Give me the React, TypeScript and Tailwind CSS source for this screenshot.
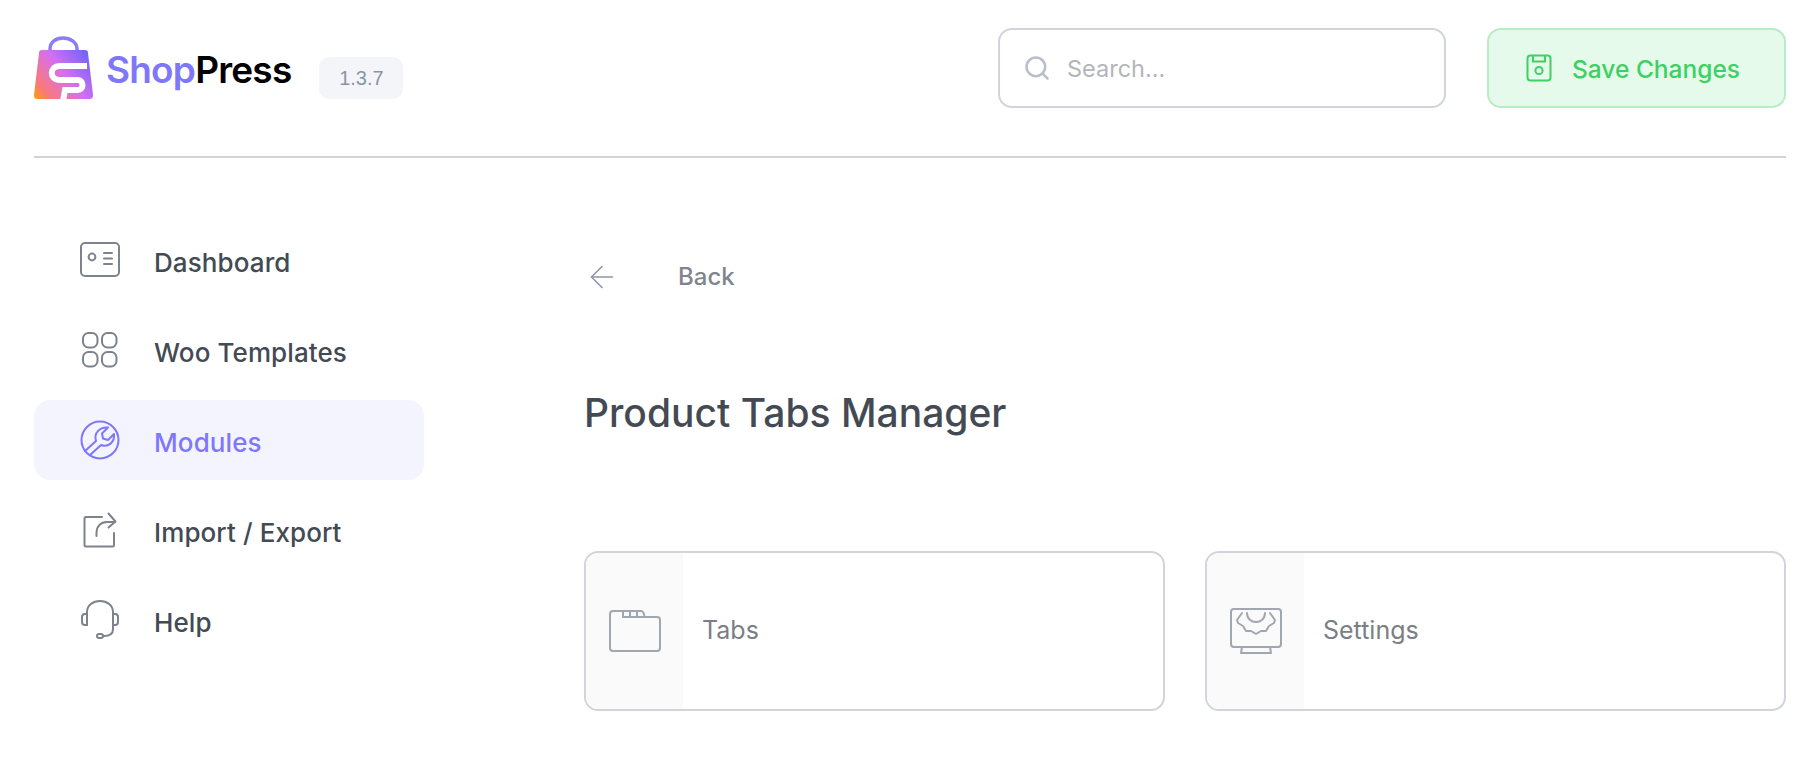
import { Search, ArrowLeft } from 'lucide-react';
import type { ReactNode } from 'react';

const font = "font-['Inter','Noto_Sans',sans-serif]";

function Logo() {
  return (
    <svg width="59" height="64" viewBox="0 0 59 64" fill="none">
      <defs>
        <linearGradient id="bag" x1="0" y1="62" x2="56" y2="18" gradientUnits="userSpaceOnUse">
          <stop offset="0" stopColor="#ff9f0a" />
          <stop offset="0.16" stopColor="#fb7a74" />
          <stop offset="0.55" stopColor="#d56ff0" />
          <stop offset="1" stopColor="#6d63fb" />
        </linearGradient>
      </defs>
      <path d="M16 15V13C16 6 22 2 29 2C36 2 43 6 43 13V15" stroke="#8a7df8" strokeWidth="3.4" />
      <path d="M8 14H51C53 14 54 15 54 17L59 59C59 62 58 63 55 63H3C1 63 0 62 0 59L5 17C5 15 6 14 8 14Z" fill="url(#bag)" />
      <path d="M53 30H26C15 30 15 44 26 44H44C50 44 50 54 44 54H31L29 65" stroke="#fff" strokeWidth="6" />
    </svg>
  );
}

function SaveIcon() {
  return (
    <svg width="26" height="28" viewBox="0 0 26 28" fill="none" stroke="#3dd163" strokeWidth="2">
      <rect x="1.5" y="1.5" width="23" height="25" rx="3" />
      <path d="M7 1.5V7.5H19V1.5" />
      <circle cx="13" cy="16.5" r="3.6" />
    </svg>
  );
}

function DashboardIcon() {
  return (
    <svg width="40" height="36" viewBox="0 0 40 36" fill="none" stroke="#7d838c" strokeWidth="2" strokeLinecap="round">
      <rect x="1" y="1" width="38" height="33" rx="4" />
      <circle cx="12" cy="15" r="3.4" />
      <path d="M24 11H32M24 16.5H32M24 22H32" />
    </svg>
  );
}

function TemplatesIcon() {
  return (
    <svg width="36" height="36" viewBox="0 0 36 36" fill="none" stroke="#7d838c" strokeWidth="2">
      <rect x="1" y="1" width="14.5" height="14.5" rx="5.5" />
      <rect x="20" y="1" width="14.5" height="14.5" rx="5.5" />
      <rect x="1" y="20" width="14.5" height="14.5" rx="5.5" />
      <rect x="20" y="20" width="14.5" height="14.5" rx="5.5" />
    </svg>
  );
}

function ModulesIcon() {
  return (
    <svg width="40" height="40" viewBox="0 0 40 40" fill="none" stroke="#7f77fb" strokeWidth="2" strokeLinejoin="round" strokeLinecap="round">
      <circle cx="20" cy="20" r="18.5" />
      <path d="M5 31L16 21C13.500 13 20 6.500 28 7.500L22 13.500L23 18.500L28 20L34 14C35 22 28 28 21 25L10 35" />
    </svg>
  );
}

function ExportIcon() {
  return (
    <svg width="34" height="36" viewBox="0 0 34 36" fill="none" stroke="#7d838c" strokeWidth="2" strokeLinecap="round" strokeLinejoin="round">
      <path d="M19 5H3C2 5 1.500 5.500 1.500 6.500V33C1.500 34 2 34.500 3 34.500H29.500C30.500 34.500 31 34 31 33V21" />
      <path d="M13.500 24V21C13.500 14 18 10 24 10H32" />
      <path d="M25.500 1.500L32.500 9.500L25.500 15.500" />
    </svg>
  );
}

function HelpIcon() {
  return (
    <svg width="38" height="40" viewBox="0 0 38 40" fill="none" stroke="#7d838c" strokeWidth="2" strokeLinecap="round">
      <path d="M6 14V12C6 5.500 12 1 19 1C26 1 32 5.500 32 12V29" />
      <path d="M6 14H4C2 14 1 15 1 17V22C1 24 2 25 4 25H6Z" />
      <path d="M32 14H34C36 14 37 15 37 17V22C37 24 36 25 34 25H32" />
      <path d="M32 29C32 34 28 36 23 36H22" />
      <rect x="16" y="34" width="6" height="4" rx="2" />
    </svg>
  );
}

function TabsIcon() {
  return (
    <svg width="52" height="42" viewBox="0 0 52 42" fill="none" stroke="#a1a7b0" strokeWidth="2" strokeLinejoin="round">
      <path d="M1 4C1 2 2 1 4 1H32C34 1 35 2 35.500 7H48C50 7 51 8 51 10V38C51 40 50 41 48 41H4C2 41 1 40 1 38Z" />
      <path d="M14 1V7H35.500M21 1V7M28 1V7" />
    </svg>
  );
}

function SettingsIcon() {
  return (
    <svg width="52" height="46" viewBox="0 0 52 46" fill="none" stroke="#a1a7b0" strokeWidth="2" strokeLinejoin="round" strokeLinecap="round">
      <rect x="1" y="1" width="50" height="38" rx="3" />
      <path d="M12 5L7 12L8 15L13 18L16 23H21L26 26L31 23H36L39 18L44 15L45 12L40 5" />
      <path d="M17 5C17 17 35 17 35 5" />
      <path d="M12 39L11 45H41L40 39" />
    </svg>
  );
}

const nav: { label: string; icon: ReactNode; active?: boolean }[] = [
  { label: 'Dashboard', icon: <DashboardIcon /> },
  { label: 'Woo Templates', icon: <TemplatesIcon /> },
  { label: 'Modules', icon: <ModulesIcon />, active: true },
  { label: 'Import / Export', icon: <ExportIcon /> },
  { label: 'Help', icon: <HelpIcon /> },
];

const cards = [
  { label: 'Tabs', icon: <TabsIcon /> },
  { label: 'Settings', icon: <SettingsIcon /> },
];

export default function App() {
  return (
    <div className={`w-[1820px] h-[776px] bg-white overflow-hidden pl-[34px] pr-[34px] ${font}`}>
      <header className="h-[158px] border-b-2 border-[#d1d5db] pt-[28px] flex items-start">
        <div className="h-[80px] flex items-center">
          <Logo />
          <span className="ml-[13px] pt-[3px] text-[37px] font-semibold tracking-[-0.8px] text-[#7f77fb]">
            Shop<span className="text-black">Press</span>
          </span>
          <span className="ml-[28px] mt-[20px] w-[84px] h-[42px] rounded-[10px] bg-[#f4f5f9] flex items-center justify-center text-[20px] text-[#8a94a6] font-['Liberation_Sans',sans-serif]">
            1.3.7
          </span>
        </div>
        <div className="ml-auto w-[448px] h-[80px] rounded-[14px] border-2 border-[#d1d5db] flex items-center pl-[23px]">
          <Search size={28} strokeWidth={2.2} className="text-[#b8bfca]" />
          <span className="ml-[16px] pt-[2px] text-[23.5px] text-[#b3b5ba]">Search...</span>
        </div>
        <div className="ml-[41px] w-[299px] h-[80px] rounded-[14px] border-2 border-[#b9ebc5] bg-[#e6faeb] flex items-center pl-[37px]">
          <SaveIcon />
          <span className="ml-[20px] pt-[2px] text-[24.5px] font-medium text-[#3dd163]">Save Changes</span>
        </div>
      </header>
      <div className="flex pt-[62px]">
        <nav className="w-[390px] flex flex-col gap-[10px]">
          {nav.map((item) => (
            <div
              key={item.label}
              className={`h-[80px] rounded-[16px] flex items-center ${item.active ? 'bg-[#f4f4ff] text-[#7f77fb]' : 'text-[#434a54]'}`}
            >
              <div className="w-[120px] flex justify-center shrink-0 pl-[12px]">{item.icon}</div>
              <span className="pt-[4px] text-[26px] font-medium tracking-[0.1px]">{item.label}</span>
            </div>
          ))}
        </nav>
        <main className="flex-1 ml-[160px]">
          <div className="flex items-center h-[40px] mt-[37px] text-[#7f858e]">
            <ArrowLeft size={36} strokeWidth={1.1} className="text-[#8f97a3]" />
            <span className="ml-[58px] text-[24px] font-medium">Back</span>
          </div>
          <h1 className="mt-[90px] text-[39px] leading-[52px] font-medium text-[#434a54]">Product Tabs Manager</h1>
          <div className="mt-[112px] grid grid-cols-2 gap-[40px]">
            {cards.map((card) => (
              <div key={card.label} className="h-[160px] rounded-[14px] border-2 border-[#d1d5db] flex overflow-hidden">
                <div className="w-[97px] bg-[#fafafa] flex items-center justify-center shrink-0">{card.icon}</div>
                <span className="ml-[19px] self-center text-[25px] text-[#7b7f85]">{card.label}</span>
              </div>
            ))}
          </div>
        </main>
      </div>
    </div>
  );
}
